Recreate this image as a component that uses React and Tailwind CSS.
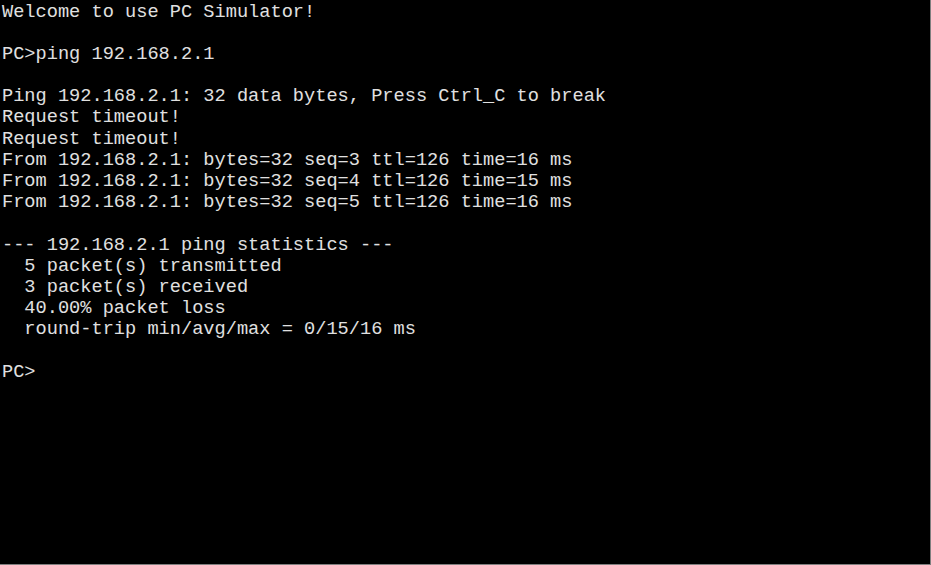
export default function App() {
  const lines = [
    "Welcome to use PC Simulator!",
    "",
    "PC>ping 192.168.2.1",
    "",
    "Ping 192.168.2.1: 32 data bytes, Press Ctrl_C to break",
    "Request timeout!",
    "Request timeout!",
    "From 192.168.2.1: bytes=32 seq=3 ttl=126 time=16 ms",
    "From 192.168.2.1: bytes=32 seq=4 ttl=126 time=15 ms",
    "From 192.168.2.1: bytes=32 seq=5 ttl=126 time=16 ms",
    "",
    "--- 192.168.2.1 ping statistics ---",
    "  5 packet(s) transmitted",
    "  3 packet(s) received",
    "  40.00% packet loss",
    "  round-trip min/avg/max = 0/15/16 ms",
    "",
    "PC>",
  ];
  return (
    <div className="w-[931px] h-[565px] bg-black border-r border-b border-[#7f7f7f] overflow-hidden">
      <div className="pl-[2px] pt-[1.5px] font-['Liberation_Mono','Courier_New',monospace] text-[18.65px] leading-[21.2px] text-[#e0e0e0] whitespace-pre">
        {lines.map((l, i) => (
          <div key={i} className="h-[21.2px]">{l}</div>
        ))}
      </div>
    </div>
  );
}
